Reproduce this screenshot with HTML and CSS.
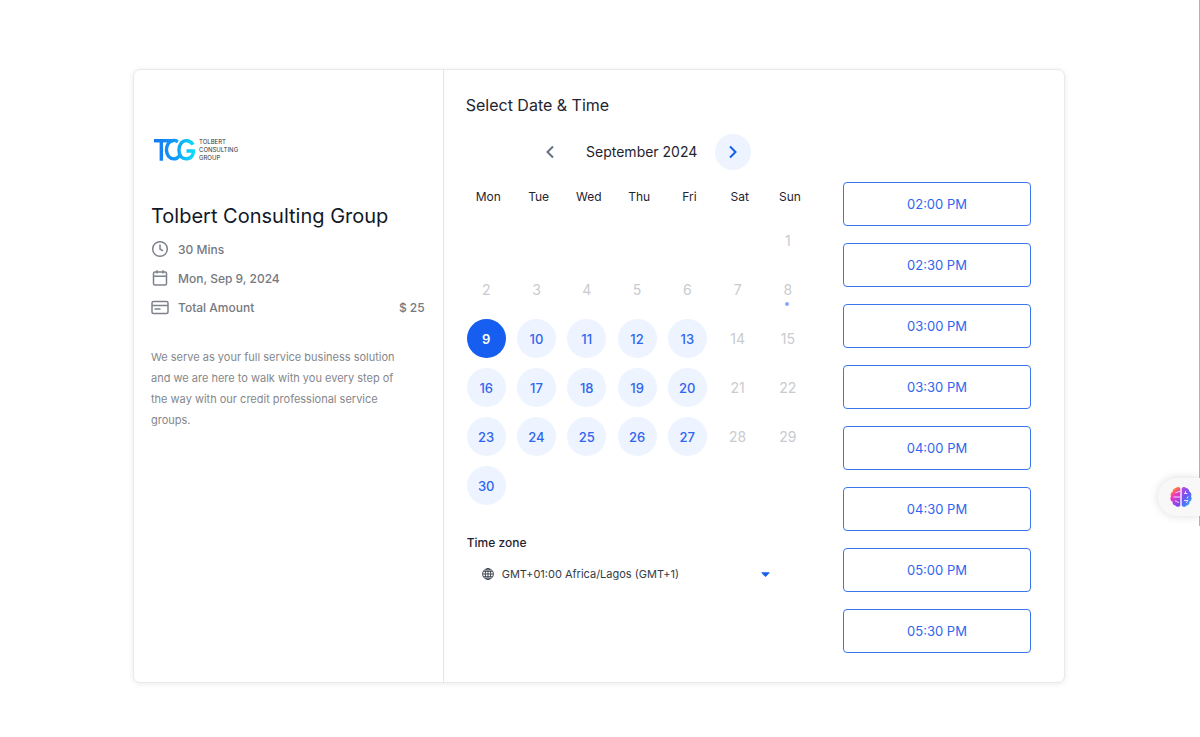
FILE: index.html
```html
<!DOCTYPE html>
<html lang="en">
<head>
<meta charset="utf-8">
<meta name="viewport" content="width=device-width, initial-scale=1">
<title>Tolbert Consulting Group</title>
<link rel="stylesheet" href="styles.css">
</head>
<body>
<main class="card">
  <aside class="info">
    <div class="logo">
      <svg class="logo-mark" viewBox="0 0 42 24" aria-hidden="true">
        <defs><linearGradient id="tcg" x1="0" x2="42" y1="0" y2="0" gradientUnits="userSpaceOnUse"><stop offset="0" stop-color="#1877f2"/><stop offset=".5" stop-color="#0f98f6"/><stop offset="1" stop-color="#0be0fb"/></linearGradient></defs>
        <g fill="none" stroke="url(#tcg)" stroke-width="3.500">
          <path d="M0 2.500h20"/><path d="M7.500 2v21"/>
          <path d="M24.500 3.500C20.500 1.200 16.500 2.500 14.500 5.500c-2.500 4-2.300 9.500.5 13 3 3.500 8 3.500 11-.5"/>
          <path d="M40 6.500C37 1.500 31 1.200 27.800 5c-3 4-3 10.500 0 14 3.200 3.200 9.200 2.500 11.500-1.500.9-1.500 1-2.800 1-4.500h-7"/>
        </g>
      </svg>
      <span class="logo-text">TOLBERT<br>CONSULTING<br>GROUP</span>
    </div>
    <h1 class="company">Tolbert Consulting Group</h1>
    <ul class="facts">
      <li class="fact">
        <svg class="fact-icon" viewBox="0 0 18 18" aria-hidden="true"><circle cx="9" cy="9" r="7.300"/><path d="M9 4.500V9l3 1.800"/></svg>
        <span>30 Mins</span>
      </li>
      <li class="fact">
        <svg class="fact-icon" viewBox="0 0 18 18" aria-hidden="true"><rect x="2.500" y="3" width="13" height="13" rx="1.500"/><path d="M2.500 7.200h13M6 1.200v3.300M12 1.200v3.300"/></svg>
        <span>Mon, Sep 9, 2024</span>
      </li>
      <li class="fact">
        <svg class="fact-icon" viewBox="0 0 18 18" aria-hidden="true"><rect x="1" y="3.500" width="16" height="12" rx="1.500"/><path d="M1 7.500h16M3.500 11h6"/></svg>
        <span>Total Amount</span><span class="price">$ 25</span>
      </li>
    </ul>
    <p class="about">We serve as your full service business solution and we are here to walk with you every step of the way with our credit professional service groups.</p>
  </aside>
  <section class="booking">
    <div class="picker">
      <h2 class="heading">Select Date &amp; Time</h2>
      <div class="month">
        <button class="nav" type="button" aria-label="Previous month"><svg class="chevron" viewBox="0 0 16 16"><path d="M11 2.500 5.500 8 11 13.500"/></svg></button>
        <span class="month-name">September 2024</span>
        <button class="nav nav-next" type="button" aria-label="Next month"><svg class="chevron" viewBox="0 0 16 16"><path d="M5 2.500 10.500 8 5 13.500"/></svg></button>
      </div>
      <table class="calendar">
        <thead><tr><th>Mon</th><th>Tue</th><th>Wed</th><th>Thu</th><th>Fri</th><th>Sat</th><th>Sun</th></tr></thead>
        <tbody>
          <tr><td></td><td></td><td></td><td></td><td></td><td></td><td><button class="day" disabled>1</button></td></tr>
          <tr><td><button class="day" disabled>2</button></td><td><button class="day" disabled>3</button></td><td><button class="day" disabled>4</button></td><td><button class="day" disabled>5</button></td><td><button class="day" disabled>6</button></td><td><button class="day" disabled>7</button></td><td><button class="day today" disabled>8</button></td></tr>
          <tr><td><button class="day open selected">9</button></td><td><button class="day open">10</button></td><td><button class="day open">11</button></td><td><button class="day open">12</button></td><td><button class="day open">13</button></td><td><button class="day" disabled>14</button></td><td><button class="day" disabled>15</button></td></tr>
          <tr><td><button class="day open">16</button></td><td><button class="day open">17</button></td><td><button class="day open">18</button></td><td><button class="day open">19</button></td><td><button class="day open">20</button></td><td><button class="day" disabled>21</button></td><td><button class="day" disabled>22</button></td></tr>
          <tr><td><button class="day open">23</button></td><td><button class="day open">24</button></td><td><button class="day open">25</button></td><td><button class="day open">26</button></td><td><button class="day open">27</button></td><td><button class="day" disabled>28</button></td><td><button class="day" disabled>29</button></td></tr>
          <tr><td><button class="day open">30</button></td><td></td><td></td><td></td><td></td><td></td><td></td></tr>
        </tbody>
      </table>
      <label class="zone-label" for="zone">Time zone</label>
      <div class="zone">
        <svg class="globe" viewBox="0 0 12 12" aria-hidden="true"><circle cx="6" cy="6" r="5.400"/><ellipse cx="6" cy="6" rx="2.700" ry="5.400"/><path d="M6 .6v10.800M.6 6h10.800M1.400 3.300h9.200M1.400 8.700h9.200"/></svg>
        <select class="zone-select" id="zone"><option>GMT+01:00 Africa/Lagos (GMT+1)</option></select>
        <svg class="caret" viewBox="0 0 10 5" aria-hidden="true"><path d="M1 0h8q1 0 .4.800L5.600 4.600q-.6.600-1.200 0L.6.800Q0 0 1 0Z"/></svg>
      </div>
    </div>
    <div class="slots">
      <button class="slot" type="button">02:00 PM</button>
      <button class="slot" type="button">02:30 PM</button>
      <button class="slot" type="button">03:00 PM</button>
      <button class="slot" type="button">03:30 PM</button>
      <button class="slot" type="button">04:00 PM</button>
      <button class="slot" type="button">04:30 PM</button>
      <button class="slot" type="button">05:00 PM</button>
      <button class="slot" type="button">05:30 PM</button>
    </div>
  </section>
</main>
<div class="scroll-edge"></div>
<button class="assistant" type="button" aria-label="Assistant">
  <svg class="brain" viewBox="0 0 22 22" aria-hidden="true">
    <defs><linearGradient id="bl" x1=".1" y1="0" x2=".5" y2="1"><stop offset=".15" stop-color="#ff8a1f"/><stop offset=".5" stop-color="#ec35c6"/><stop offset="1" stop-color="#7a4cf2"/></linearGradient><linearGradient id="br" x1="0" y1="0" x2=".6" y2="1"><stop offset="0" stop-color="#c348dd"/><stop offset=".5" stop-color="#7054f0"/><stop offset="1" stop-color="#2c9dff"/></linearGradient></defs>
    <path fill="url(#bl)" d="M10.300 2.500v17c-1 1.800-3.800 1.800-4.900 0-2-.2-3.200-2-2.800-3.700C.2 14.800-.1 12 1 10.500.1 8.500.9 6.500 2.500 5.800 2.800 3.500 4.500 2 6 2c1-1.600 3.600-1.500 4.300.5Z"/>
    <path fill="url(#br)" d="M11.700 2.500v17c1 1.800 3.800 1.800 4.900 0 2-.2 3.200-2 2.800-3.700 2.400-1 2.700-3.800 1.600-5.300.9-2 .1-4-1.500-4.700C19.200 3.500 17.500 2 16 2c-1-1.600-3.600-1.500-4.300.5Z"/>
    <path class="folds" d="M10 5.500c-2-.5-2.500 1.500-4.500 1M3.500 11h6.500M5 15c1.500-.5 2 1.500 4 1.500M14 7.500h3.500M15.500 5v2.500M18 10.500l-1 2M14 14.500h4l-2 2.500"/>
  </svg>
</button>
</body>
</html>
```
FILE: styles.css
```css
* { box-sizing: border-box; }
body { margin: 0; padding: 69px 26px 54px 24px; background: #fff; color: #1f2430; font-family: Inter, "Liberation Sans", sans-serif; }
button, select { font-family: inherit; }
button { cursor: pointer; padding: 0; }
.card { display: flex; max-width: 932px; margin: 0 auto; border: 1px solid #e9e9e9; border-radius: 7px; box-shadow: 0 1px 6px rgba(0, 0, 0, .08); background: #fff; }
.info { flex: none; width: 33.3%; border-right: 1px solid #e4e5e8; padding: 67px 18px 24px 17px; }
.logo { display: flex; align-items: center; gap: 4px; height: 26px; padding-left: 3px; }
.logo-mark { width: 41px; height: 24px; }
.logo-text { font-size: 6px; line-height: 8px; color: #2f3338; }
.company { margin: 39px 0 0; font-size: 20px; line-height: 28px; font-weight: 400; color: #111827; }
.facts { list-style: none; margin: 10px 0 0; padding: 0; display: grid; gap: 11px; }
.fact { display: flex; align-items: center; gap: 9px; height: 18px; font-size: 12px; font-weight: 500; color: #76797f; }
.fact-icon { width: 18px; height: 18px; fill: none; stroke: #7d828c; stroke-width: 1.5; }
.price { margin-left: auto; }
.about { max-width: 260px; margin: 31px 0 0; font-size: 11px; line-height: 21px; color: #85878b; }
.booking { flex: 1; display: flex; justify-content: space-between; padding: 23px 33px 29px 22px; }
.picker { width: 352px; }
.heading { margin: 0; font-size: 16px; line-height: 24px; font-weight: 400; }
.month { display: flex; align-items: center; justify-content: center; gap: 18px; margin: 17px 0 11px; }
.month-name { font-size: 14px; line-height: 20px; }
.nav { display: grid; place-items: center; width: 36px; height: 36px; border: 0; border-radius: 50%; background: none; color: #667085; }
.nav-next { background: #edf3ff; color: #155eef; }
.chevron { width: 16px; height: 16px; fill: none; stroke: currentColor; stroke-width: 2; }
.calendar { width: 100%; table-layout: fixed; border-collapse: collapse; }
.calendar th { height: 30px; padding: 0 5px 0 0; font-size: 12px; font-weight: 400; text-align: center; }
.calendar td { height: 49px; padding: 0 9px 0 1px; }
.calendar tbody::before { content: ""; display: block; height: 5px; }
.day { display: grid; place-items: center; position: relative; width: 39px; height: 39px; border: 0; border-radius: 50%; background: none; font-size: 14px; color: #c9cbcf; }
.open { background: #edf3ff; color: #2f66ee; font-size: 13px; font-weight: 500; }
.selected { background: #155eef; color: #fff; font-weight: 600; }
.today::after { content: ""; position: absolute; left: 17px; bottom: 3px; width: 4px; height: 4px; border-radius: 50%; background: #84a9fb; }
.zone-label { display: block; margin: 23px 0 0 1px; font-size: 12px; line-height: 20px; font-weight: 500; }
.zone { display: flex; align-items: center; gap: 8px; margin: 11px 0 0; padding: 0 48px 0 16px; }
.globe { width: 12px; height: 12px; fill: none; stroke: #343b48; stroke-width: .9; }
.zone-select { flex: 1; height: 20px; padding: 0; border: 0; appearance: none; background: none; color: #343b48; font-size: 11px; }
.caret { width: 9px; height: 5px; fill: #155eef; }
.slots { display: grid; gap: 17px; align-content: start; width: 188px; padding-top: 89px; }
.slot { height: 44px; border: 1px solid #3b76f2; border-radius: 4px; background: #fff; color: #2f66ee; font-size: 13px; }
.scroll-edge { position: fixed; top: 0; right: 0; width: 1px; height: 526px; background: #b3b3b3; }
.assistant { position: fixed; right: 0; top: 478px; display: flex; align-items: center; width: 42px; height: 38px; padding-left: 12px; border: 0; border-radius: 19px 0 0 19px; background: #f8f8f8; box-shadow: 0 0 10px rgba(0, 0, 0, .14); }
.brain { width: 22px; height: 22px; }
.folds { fill: none; stroke: #f2d9ff; stroke-width: 1; }
```
